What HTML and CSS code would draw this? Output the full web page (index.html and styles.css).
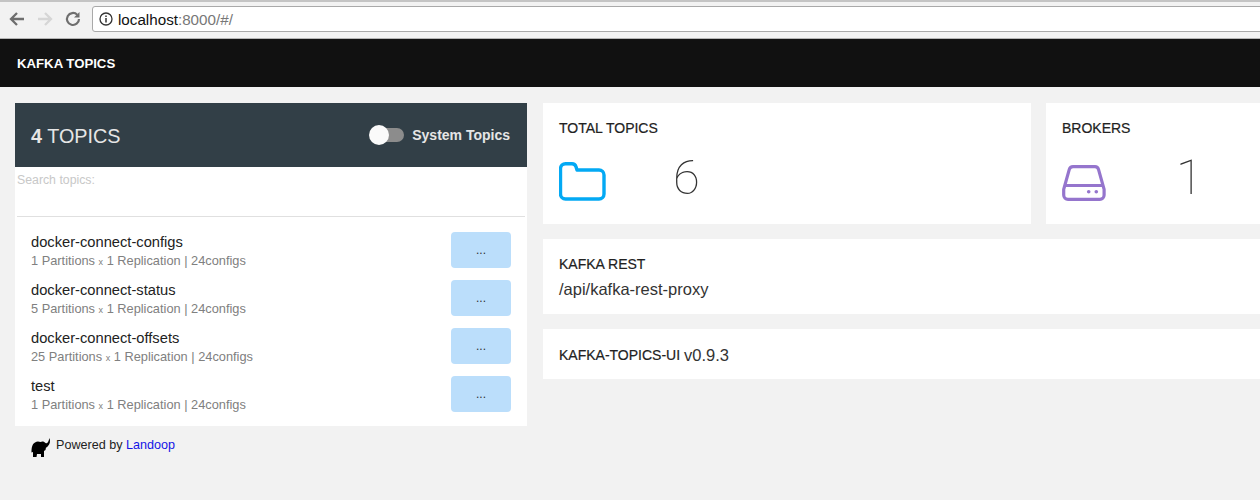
FILE: index.html
```html
<!DOCTYPE html>
<html lang="en">
<head>
<meta charset="utf-8">
<title>Kafka Topics</title>
<link rel="stylesheet" href="styles.css">
</head>
<body>
<div class="chrome">
  <div class="tabline"></div>
  <div class="toolbar">
    <svg class="nav" width="18" height="18" viewBox="0 0 18 18"><path d="M16 9H3.500M9 3L3 9l6 6" fill="none" stroke="#6e6e6e" stroke-width="2.300"/></svg>
    <svg class="nav" width="18" height="18" viewBox="0 0 18 18"><path d="M2 9h12.500M9 3l6 6-6 6" fill="none" stroke="#d6d6d6" stroke-width="2.300"/></svg>
    <svg class="nav" width="18" height="18" viewBox="0 0 18 18"><path d="M15 9a6 6 0 1 1-1.800-4.300" fill="none" stroke="#6e6e6e" stroke-width="2.200"/><path d="M15.500 2v5.500H10z" fill="#6e6e6e"/></svg>
    <div class="omnibox">
      <svg width="14" height="14" viewBox="0 0 14 14"><circle cx="7" cy="7" r="6" fill="none" stroke="#333" stroke-width="1.300"/><path d="M7 6v4.400M7 3.400v1.500" stroke="#333" stroke-width="1.500"/></svg>
      <span class="host">localhost</span><span class="port">:8000/#/</span>
    </div>
  </div>
</div>
<header class="topbar">KAFKA TOPICS</header>
<main class="content">
  <section class="left">
    <div class="panel">
      <div class="panel-head">
        <div class="count"><b>4</b> TOPICS</div>
        <div class="toggle-wrap">
          <span class="toggle"><span class="knob"></span></span>
          <span class="toggle-label">System Topics</span>
        </div>
      </div>
      <div class="search">Search topics:</div>
      <ul class="topics">
        <li class="topic"><div><div class="name">docker-connect-configs</div><div class="meta">1 Partitions <small>x</small> 1 Replication | 24configs</div></div><button class="more">...</button></li>
        <li class="topic"><div><div class="name">docker-connect-status</div><div class="meta">5 Partitions <small>x</small> 1 Replication | 24configs</div></div><button class="more">...</button></li>
        <li class="topic"><div><div class="name">docker-connect-offsets</div><div class="meta">25 Partitions <small>x</small> 1 Replication | 24configs</div></div><button class="more">...</button></li>
        <li class="topic"><div><div class="name">test</div><div class="meta">1 Partitions <small>x</small> 1 Replication | 24configs</div></div><button class="more">...</button></li>
      </ul>
    </div>
    <div class="powered">
      <svg class="elephant" width="20" height="20" viewBox="0 0 20 20"><path d="M18.500 0C19.500 3 19 6 17 8c-1 1-1.500 1.500-2 1.500L14.500 12 13 13v6h-3v-3H6l-.5 3H2v-5l-1.500.5C.5 10 1 6 4 4.500 6 3 8 3.500 9.500 4c1.500-1 4-.5 5 1 1.500 1 2.500-.5 3-2 .5-1 .5-2 1-3z" fill="#000"/></svg>
      <span>Powered by <a href="#">Landoop</a></span>
    </div>
  </section>
  <section class="right">
    <div class="stats">
      <div class="card stat total">
        <h3 class="title">TOTAL TOPICS</h3>
        <div class="stat-body">
          <svg width="47" height="39" viewBox="0 0 47 39"><path d="M6.500 1.700H13c2.500 0 3.500 1.500 4 3l1 3.300h22a5 5 0 0 1 5 5V32a5 5 0 0 1-5 5H6.500a5 5 0 0 1-5-5V6.500a5 5 0 0 1 5-4.800z" fill="none" stroke="#03a9f4" stroke-width="3.400" stroke-linejoin="round"/></svg>
          <span class="num num-six">6</span>
        </div>
      </div>
      <div class="card stat brokers">
        <h3 class="title">BROKERS</h3>
        <div class="stat-body">
          <svg width="44" height="36" viewBox="0 0 44 36"><path d="M11 1.700h22c1.800 0 3 1 3.500 2.700l5.600 20V30a4.300 4.300 0 0 1-4.300 4.300H6A4.300 4.300 0 0 1 1.700 30v-5.600l5.600-20C7.800 2.700 9.200 1.700 11 1.700zM2 20.500h40" fill="none" stroke="#9575cd" stroke-width="3.200" stroke-linejoin="round"/><circle cx="26.700" cy="26.700" r="1.800" fill="#9575cd"/><circle cx="34.300" cy="26.700" r="1.800" fill="#9575cd"/></svg>
          <span class="num num-one">1</span>
        </div>
      </div>
    </div>
    <div class="card rest">
      <h3 class="title">KAFKA REST</h3>
      <div class="value">/api/kafka-rest-proxy</div>
    </div>
    <div class="card version">
      <h3 class="title">KAFKA-TOPICS-UI</h3> <span class="value">v0.9.3</span>
    </div>
  </section>
</main>
</body>
</html>
```
FILE: styles.css
```css
* { box-sizing: border-box; }
html, body { margin: 0; height: 100%; overflow: hidden; }
body { width: 1260px; background: #f2f2f2; font-family: "Liberation Sans", Arial, sans-serif; color: #222; }

.chrome { height: 39px; background: #f2f2f2; }
.tabline { height: 2px; background: #c4c4c4; }
.toolbar { height: 37px; display: flex; align-items: center; padding: 0 0 2px 8px; gap: 10px; border-bottom: 1px solid #b5b5b5; }
.nav { flex: none; }
.omnibox { flex: 1; margin-right: -8px; height: 26px; background: #fff; border: 1px solid #a9a9a9; border-radius: 3px; display: flex; align-items: center; padding-left: 6px; font-size: 15.200px; }
.omnibox svg { margin-right: 5px; }
.host { color: #111; }
.port { color: #777; }

.topbar { height: 48px; background: #111; color: #fff; font-size: 13.200px; font-weight: bold; display: flex; align-items: center; padding-left: 17px; }

.content { display: flex; padding: 16px 0 0 15px; gap: 16px; width: 1400px; }
.left { width: 512px; flex: none; }
.panel { background: #fff; height: 323px; }
.panel-head { height: 64px; background: #323f47; color: #eee; display: flex; align-items: center; justify-content: space-between; padding: 2px 17px 0 16px; }
.count { font-size: 19.800px; color: #e6e6e6; }
.toggle-wrap { display: flex; align-items: center; gap: 8px; margin-top: -2px; }
.toggle { width: 34px; height: 14px; border-radius: 7px; background: #8c8c8c; position: relative; display: block; }
.knob { position: absolute; left: -1px; top: -3px; width: 20px; height: 20px; border-radius: 50%; background: #fafafa; }
.toggle-label { font-size: 14px; font-weight: bold; color: #e6e6e6; }
.search { margin: 0 2px; height: 50px; padding-top: 6px; font-size: 12.300px; color: #c8c8c8; border-bottom: 1px solid #e0e0e0; }
.topics { list-style: none; margin: 0; padding: 15px 16px 0; }
.topic { height: 48px; display: flex; justify-content: space-between; }
.name { font-size: 14.700px; line-height: 20px; color: #222; }
.meta { font-size: 12.800px; line-height: 17px; color: #808080; }
.meta small { font-size: 9px; }
.more { width: 60px; height: 36px; border: 0; border-radius: 4px; background: #bbdefb; color: #333; font: 12px "Liberation Sans", Arial, sans-serif; padding: 0; }

.powered { display: flex; align-items: flex-start; gap: 5px; padding: 12px 0 0 16px; font-size: 12.600px; line-height: 15px; color: #222; }
.powered a { color: #1414e6; text-decoration: none; }

.right { flex: 1; display: flex; flex-direction: column; gap: 15px; }
.stats { display: flex; gap: 15px; }
.card { background: #fff; padding: 0 16px; }
.stat { height: 121px; padding-top: 16px; }
.total { width: 488px; }
.brokers { flex: 1; }
.title { margin: 0; display: inline; font-size: 14px; font-weight: normal; -webkit-text-stroke: .2px #222; color: #222; }
.stat-body { display: flex; align-items: flex-end; margin-top: 16px; height: 48px; }
.num { font-family: Roboto, "Liberation Sans", sans-serif; font-size: 49px; line-height: 48px; font-weight: 100; color: #333; align-self: flex-start; margin-top: 1px; }
.num-six { margin-left: 67px; }
.num-one { margin-left: 70px; }
.rest { height: 75px; padding-top: 16px; }
.value { font-size: 16.500px; color: #333; }
.rest .value { margin-top: 7px; }
.version { height: 50px; display: flex; align-items: center; gap: 4px; padding-top: 2px; }
```
